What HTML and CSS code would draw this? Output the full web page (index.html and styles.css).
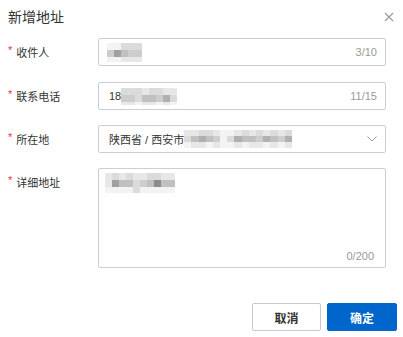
FILE: index.html
```html
<!DOCTYPE html>
<html lang="zh-CN">
<head>
<meta charset="utf-8">
<title>新增地址</title>
<link rel="stylesheet" href="styles.css">
</head>
<body>
<div class="dialog">
  <div class="header">
    <span class="title">新增地址</span>
    <span class="close"><svg width="10" height="10" viewBox="0 0 10 10"><path d="M1 1L9 9M9 1L1 9" stroke="#999" stroke-width="1.1" fill="none"/></svg></span>
  </div>
  <div class="form">
    <div class="row r1">
      <div class="label"><span class="req">*</span>收件人</div>
      <div class="input">
        <div class="mosaic mz1">
          <i class="c0"></i><i class="c0"></i><i class="c2"></i><i class="c2"></i><i class="c2"></i>
          <i class="c3"></i><i class="c6"></i><i class="c4"></i><i class="c3"></i><i class="c3"></i>
          <i class="c0"></i><i class="c0"></i><i class="c1"></i><i class="c1"></i><i class="c1"></i>
        </div>
        <span class="count">3/10</span>
      </div>
    </div>
    <div class="row">
      <div class="label"><span class="req">*</span>联系电话</div>
      <div class="input">
        <span class="val">18</span>
        <div class="mosaic mz2">
          <i class="c2"></i><i class="c2"></i><i class="c2"></i><i class="c1"></i><i class="c2"></i><i class="c2"></i><i class="c1"></i><i class="c1"></i>
          <i class="c3"></i><i class="c3"></i><i class="c2"></i><i class="c4"></i><i class="c4"></i><i class="c3"></i><i class="c5"></i><i class="c2"></i>
          <i class="c1"></i><i class="c1"></i><i class="c0"></i><i class="c1"></i><i class="c1"></i><i class="c0"></i><i class="c1"></i><i class="c0"></i>
        </div>
        <span class="count">11/15</span>
      </div>
    </div>
    <div class="row">
      <div class="label"><span class="req">*</span>所在地</div>
      <div class="input select">
        <span class="val">陕西省 / 西安市</span>
        <div class="mosaic mz3">
          <i class="c1"></i><i class="c1"></i><i class="c2"></i><i class="c2"></i><i class="c1"></i><i class="c0"></i><i class="c0"></i><i class="c1"></i><i class="c2"></i><i class="c1"></i><i class="c2"></i><i class="c1"></i><i class="c2"></i><i class="c1"></i><i class="c2"></i>
          <i class="c2"></i><i class="c4"></i><i class="c5"></i><i class="c4"></i><i class="c3"></i><i class="c0"></i><i class="c2"></i><i class="c5"></i><i class="c4"></i><i class="c4"></i><i class="c3"></i><i class="c5"></i><i class="c4"></i><i class="c3"></i><i class="c5"></i>
          <i class="c0"></i><i class="c1"></i><i class="c1"></i><i class="c0"></i><i class="c1"></i><i class="c0"></i><i class="c0"></i><i class="c1"></i><i class="c0"></i><i class="c1"></i><i class="c1"></i><i class="c0"></i><i class="c1"></i><i class="c0"></i><i class="c1"></i>
        </div>
        <svg class="chev" width="10" height="6" viewBox="0 0 10 6"><path d="M0.5 0.5L5 5L9.5 0.5" stroke="#999" stroke-width="1" fill="none"/></svg>
      </div>
    </div>
    <div class="row">
      <div class="label"><span class="req">*</span>详细地址</div>
      <div class="input textarea">
        <div class="mosaic mz4">
          <i class="c1"></i><i class="c2"></i><i class="c1"></i><i class="c2"></i><i class="c1"></i><i class="c1"></i><i class="c2"></i><i class="c2"></i><i class="c1"></i><i class="c1"></i>
          <i class="c1"></i><i class="c6"></i><i class="c4"></i><i class="c4"></i><i class="c2"></i><i class="c3"></i><i class="c4"></i><i class="c7"></i><i class="c4"></i><i class="c4"></i>
          <i class="c0"></i><i class="c0"></i><i class="c0"></i><i class="c0"></i><i class="c2"></i><i class="c0"></i><i class="c0"></i><i class="c0"></i><i class="c0"></i><i class="c0"></i>
        </div>
        <span class="count">0/200</span>
      </div>
    </div>
  </div>
  <div class="footer">
    <button class="btn">取消</button>
    <button class="btn primary">确定</button>
  </div>
</div>
</body>
</html>
```
FILE: styles.css
```css
html, body {
  margin: 0;
  padding: 0;
  background: #fff;
}
body {
  font-family: "Liberation Sans", "Noto Sans CJK SC", sans-serif;
  color: #333;
}
.dialog {
  width: 403px;
  height: 337px;
  display: flex;
  flex-direction: column;
  box-sizing: border-box;
}
.header {
  height: 32px;
  display: flex;
  align-items: center;
  justify-content: space-between;
  padding: 0 9px 0 8px;
}
.title {
  font-family: "Noto Sans CJK SC", sans-serif;
  font-size: 14px;
  line-height: 20px;
  color: #333;
}
.close {
  display: flex;
  width: 10px;
  height: 10px;
  margin-top: 2px;
}
.form {
  padding: 6px 17px 0 8px;
}
.row {
  display: flex;
  margin-bottom: 15px;
}
.row.r1 {
  margin-bottom: 16px;
}
.label {
  width: 90px;
  height: 28px;
  display: flex;
  align-items: center;
  font-family: "Noto Sans CJK SC", sans-serif;
  font-size: 11px;
  color: #333;
}
.req {
  color: #e5383b;
  font-family: "Liberation Sans", sans-serif;
  font-size: 11px;
  margin-right: 4px;
  position: relative;
  top: -2px;
}
.input {
  flex: 1;
  height: 28px;
  box-sizing: border-box;
  border: 1px solid #cbcfd5;
  border-radius: 2px;
  display: flex;
  align-items: center;
  padding: 0 8px 0 10px;
  font-size: 11px;
  color: #333;
}
.val {
  font-family: "Liberation Sans", "Noto Sans CJK SC", sans-serif;
  white-space: pre;
}
.count {
  margin-left: auto;
  color: #999;
  font-size: 11px;
  line-height: 13px;
}
.mosaic {
  display: grid;
}
.mosaic i {
  display: block;
}
.mz1 {
  margin-left: -2px;
  grid-template-columns: repeat(5, 7px);
  grid-template-rows: 7px 7px 5px;
}
.mz2 {
  grid-template-columns: repeat(8, 7px);
  grid-template-rows: 7px 7px 3px;
  margin-top: 1px;
}
.mz3 {
  grid-template-columns: repeat(15, 7.2px);
  grid-template-rows: 6px 6px 6px;
}
.mz4 {
  grid-template-columns: repeat(10, 7px);
  grid-template-rows: 7px 7px 6px;
}
.c0 { background: #f3f3f3; }
.c1 { background: #e7e7e7; }
.c2 { background: #dbdbdb; }
.c3 { background: #cdcdcd; }
.c4 { background: #c0c0c0; }
.c5 { background: #b0b0b0; }
.c6 { background: #a0a0a0; }
.c7 { background: #8c8c8c; }
.select .chev {
  margin-left: auto;
}
.input.textarea {
  height: 100px;
  flex-direction: column;
  align-items: flex-start;
  justify-content: space-between;
  padding: 4px 11px 4px 6px;
}
.input.textarea .count {
  align-self: flex-end;
}
.footer {
  margin-top: auto;
  display: flex;
  justify-content: flex-end;
  gap: 6px;
  padding: 0 6px 6px 0;
}
.btn {
  width: 69px;
  height: 28px;
  box-sizing: border-box;
  border: 1px solid #c5c9cf;
  border-radius: 2px;
  background: #fff;
  color: #333;
  font-family: "Noto Sans CJK SC", sans-serif;
  font-size: 12px;
  font-weight: bold;
  padding: 0;
  cursor: pointer;
}
.btn.primary {
  width: 70px;
  background: #0066cc;
  border-color: #0066cc;
  color: #fff;
}
```
